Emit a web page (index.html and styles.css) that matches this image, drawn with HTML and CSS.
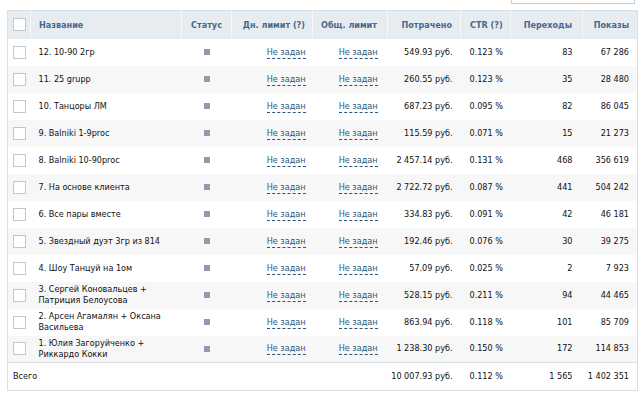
FILE: index.html
```html
<!DOCTYPE html>
<html lang="ru">
<head>
  <meta charset="UTF-8" />
  <title>Объявления</title>
  <link rel="stylesheet" href="styles.css">
</head>
<body>

  <div class="page">
    <div class="topbar">
      <div class="search-box"></div>
    </div>

    <table class="ads">
      <thead>
        <tr>
          <th class="col-check"><span class="checkbox"></span></th>
          <th class="col-name">Название</th>
          <th class="col-status">Статус</th>
          <th class="col-day">Дн. лимит (?)</th>
          <th class="col-total">Общ. лимит</th>
          <th class="col-spent">Потрачено</th>
          <th class="col-ctr">CTR (?)</th>
          <th class="col-clicks">Переходы</th>
          <th class="col-views">Показы</th>
        </tr>
      </thead>
      <tbody>
        <tr>
          <td class="col-check"><span class="checkbox"></span></td>
          <td class="col-name">12. 10-90 2гр</td>
          <td class="col-status"><span class="status"></span></td>
          <td class="col-day"><a class="limit">Не задан</a></td>
          <td class="col-total"><a class="limit">Не задан</a></td>
          <td class="col-spent">549.93 руб.</td>
          <td class="col-ctr">0.123 %</td>
          <td class="col-clicks">83</td>
          <td class="col-views">67 286</td>
        </tr>
        <tr>
          <td class="col-check"><span class="checkbox"></span></td>
          <td class="col-name">11. 25 grupp</td>
          <td class="col-status"><span class="status"></span></td>
          <td class="col-day"><a class="limit">Не задан</a></td>
          <td class="col-total"><a class="limit">Не задан</a></td>
          <td class="col-spent">260.55 руб.</td>
          <td class="col-ctr">0.123 %</td>
          <td class="col-clicks">35</td>
          <td class="col-views">28 480</td>
        </tr>
        <tr>
          <td class="col-check"><span class="checkbox"></span></td>
          <td class="col-name">10. Танцоры ЛМ</td>
          <td class="col-status"><span class="status"></span></td>
          <td class="col-day"><a class="limit">Не задан</a></td>
          <td class="col-total"><a class="limit">Не задан</a></td>
          <td class="col-spent">687.23 руб.</td>
          <td class="col-ctr">0.095 %</td>
          <td class="col-clicks">82</td>
          <td class="col-views">86 045</td>
        </tr>
        <tr>
          <td class="col-check"><span class="checkbox"></span></td>
          <td class="col-name">9. Balniki 1-9proc</td>
          <td class="col-status"><span class="status"></span></td>
          <td class="col-day"><a class="limit">Не задан</a></td>
          <td class="col-total"><a class="limit">Не задан</a></td>
          <td class="col-spent">115.59 руб.</td>
          <td class="col-ctr">0.071 %</td>
          <td class="col-clicks">15</td>
          <td class="col-views">21 273</td>
        </tr>
        <tr>
          <td class="col-check"><span class="checkbox"></span></td>
          <td class="col-name">8. Balniki 10-90proc</td>
          <td class="col-status"><span class="status"></span></td>
          <td class="col-day"><a class="limit">Не задан</a></td>
          <td class="col-total"><a class="limit">Не задан</a></td>
          <td class="col-spent">2 457.14 руб.</td>
          <td class="col-ctr">0.131 %</td>
          <td class="col-clicks">468</td>
          <td class="col-views">356 619</td>
        </tr>
        <tr>
          <td class="col-check"><span class="checkbox"></span></td>
          <td class="col-name">7. На основе клиента</td>
          <td class="col-status"><span class="status"></span></td>
          <td class="col-day"><a class="limit">Не задан</a></td>
          <td class="col-total"><a class="limit">Не задан</a></td>
          <td class="col-spent">2 722.72 руб.</td>
          <td class="col-ctr">0.087 %</td>
          <td class="col-clicks">441</td>
          <td class="col-views">504 242</td>
        </tr>
        <tr>
          <td class="col-check"><span class="checkbox"></span></td>
          <td class="col-name">6. Все пары вместе</td>
          <td class="col-status"><span class="status"></span></td>
          <td class="col-day"><a class="limit">Не задан</a></td>
          <td class="col-total"><a class="limit">Не задан</a></td>
          <td class="col-spent">334.83 руб.</td>
          <td class="col-ctr">0.091 %</td>
          <td class="col-clicks">42</td>
          <td class="col-views">46 181</td>
        </tr>
        <tr>
          <td class="col-check"><span class="checkbox"></span></td>
          <td class="col-name">5. Звездный дуэт 3гр из 814</td>
          <td class="col-status"><span class="status"></span></td>
          <td class="col-day"><a class="limit">Не задан</a></td>
          <td class="col-total"><a class="limit">Не задан</a></td>
          <td class="col-spent">192.46 руб.</td>
          <td class="col-ctr">0.076 %</td>
          <td class="col-clicks">30</td>
          <td class="col-views">39 275</td>
        </tr>
        <tr>
          <td class="col-check"><span class="checkbox"></span></td>
          <td class="col-name">4. Шоу Танцуй на 1ом</td>
          <td class="col-status"><span class="status"></span></td>
          <td class="col-day"><a class="limit">Не задан</a></td>
          <td class="col-total"><a class="limit">Не задан</a></td>
          <td class="col-spent">57.09 руб.</td>
          <td class="col-ctr">0.025 %</td>
          <td class="col-clicks">2</td>
          <td class="col-views">7 923</td>
        </tr>
        <tr>
          <td class="col-check"><span class="checkbox"></span></td>
          <td class="col-name">3. Сергей Коновальцев + Патриция Белоусова</td>
          <td class="col-status"><span class="status"></span></td>
          <td class="col-day"><a class="limit">Не задан</a></td>
          <td class="col-total"><a class="limit">Не задан</a></td>
          <td class="col-spent">528.15 руб.</td>
          <td class="col-ctr">0.211 %</td>
          <td class="col-clicks">94</td>
          <td class="col-views">44 465</td>
        </tr>
        <tr>
          <td class="col-check"><span class="checkbox"></span></td>
          <td class="col-name">2. Арсен Агамалян + Оксана Васильева</td>
          <td class="col-status"><span class="status"></span></td>
          <td class="col-day"><a class="limit">Не задан</a></td>
          <td class="col-total"><a class="limit">Не задан</a></td>
          <td class="col-spent">863.94 руб.</td>
          <td class="col-ctr">0.118 %</td>
          <td class="col-clicks">101</td>
          <td class="col-views">85 709</td>
        </tr>
        <tr>
          <td class="col-check"><span class="checkbox"></span></td>
          <td class="col-name">1. Юлия Загоруйченко + Риккардо Кокки</td>
          <td class="col-status"><span class="status"></span></td>
          <td class="col-day"><a class="limit">Не задан</a></td>
          <td class="col-total"><a class="limit">Не задан</a></td>
          <td class="col-spent">1 238.30 руб.</td>
          <td class="col-ctr">0.150 %</td>
          <td class="col-clicks">172</td>
          <td class="col-views">114 853</td>
        </tr>
      </tbody>
      <tfoot>
        <tr>
          <td class="col-sum" colspan="5">Всего</td>
          <td class="col-spent">10 007.93 руб.</td>
          <td class="col-ctr">0.112 %</td>
          <td class="col-clicks">1 565</td>
          <td class="col-views">1 402 351</td>
        </tr>
      </tfoot>
    </table>
  </div>

</body>
</html>
```

FILE: styles.css
```css
* {
  box-sizing: border-box;
  margin: 0;
  padding: 0;
}

body {
  background: #fff;
  font-family: "DejaVu Sans Condensed", "DejaVu Sans", sans-serif;
  font-size: 9px;
  color: #111;
}

.page {
  padding: 0 7px;
}

.topbar {
  display: flex;
  justify-content: flex-end;
  padding-right: 2px;
}

.search-box {
  width: 124px;
  height: 4px;
  border: 1px solid #c9ced4;
  border-top: none;
}

.ads {
  width: 630px;
  margin-top: 6px;
  border-collapse: collapse;
  table-layout: fixed;
  border: 1px solid #dadfe4;
}

.ads th {
  height: 28px;
  background: #e7ecf1;
  color: #45688e;
  font-weight: bold;
  text-align: right;
  vertical-align: middle;
  border-left: 1px solid #f6f8fa;
  white-space: nowrap;
}

.ads th:first-child {
  border-left: none;
}

.ads td {
  height: 27px;
  line-height: 11px;
  vertical-align: middle;
  text-align: right;
}

.ads tbody tr:nth-child(even) td {
  background: #f7f7f7;
}

.ads tfoot td {
  height: 28px;
  border-top: 1px solid #dadfe4;
}

.col-check {
  width: 23px;
  text-align: center !important;
  padding-left: 1px;
}

.col-name {
  width: 151px;
  text-align: left !important;
  padding: 0 10px 0 8px;
}

.col-status {
  width: 50px;
  text-align: center !important;
}

.col-day {
  width: 81px;
  padding-right: 7px;
}

.col-total {
  width: 75px;
  padding-right: 10px;
}

.col-spent {
  width: 73px;
  padding-right: 8px;
}

.col-ctr {
  width: 50px;
  text-align: left !important;
  padding-left: 9px;
}

.col-clicks {
  width: 72px;
  padding-right: 10px;
}

.col-views {
  width: 55px;
  padding-right: 8px;
}

.col-sum {
  text-align: left !important;
  padding-left: 5px;
}

.checkbox {
  display: inline-block;
  width: 13px;
  height: 13px;
  border: 1px solid #c3c7cc;
  background: #fff;
  vertical-align: middle;
}

.status {
  display: inline-block;
  width: 6px;
  height: 6px;
  background: #8e9bae;
  vertical-align: middle;
}

.limit {
  color: #2b587a;
  border-bottom: 1px dashed #2b587a;
  padding-bottom: 1px;
  cursor: pointer;
}
```
